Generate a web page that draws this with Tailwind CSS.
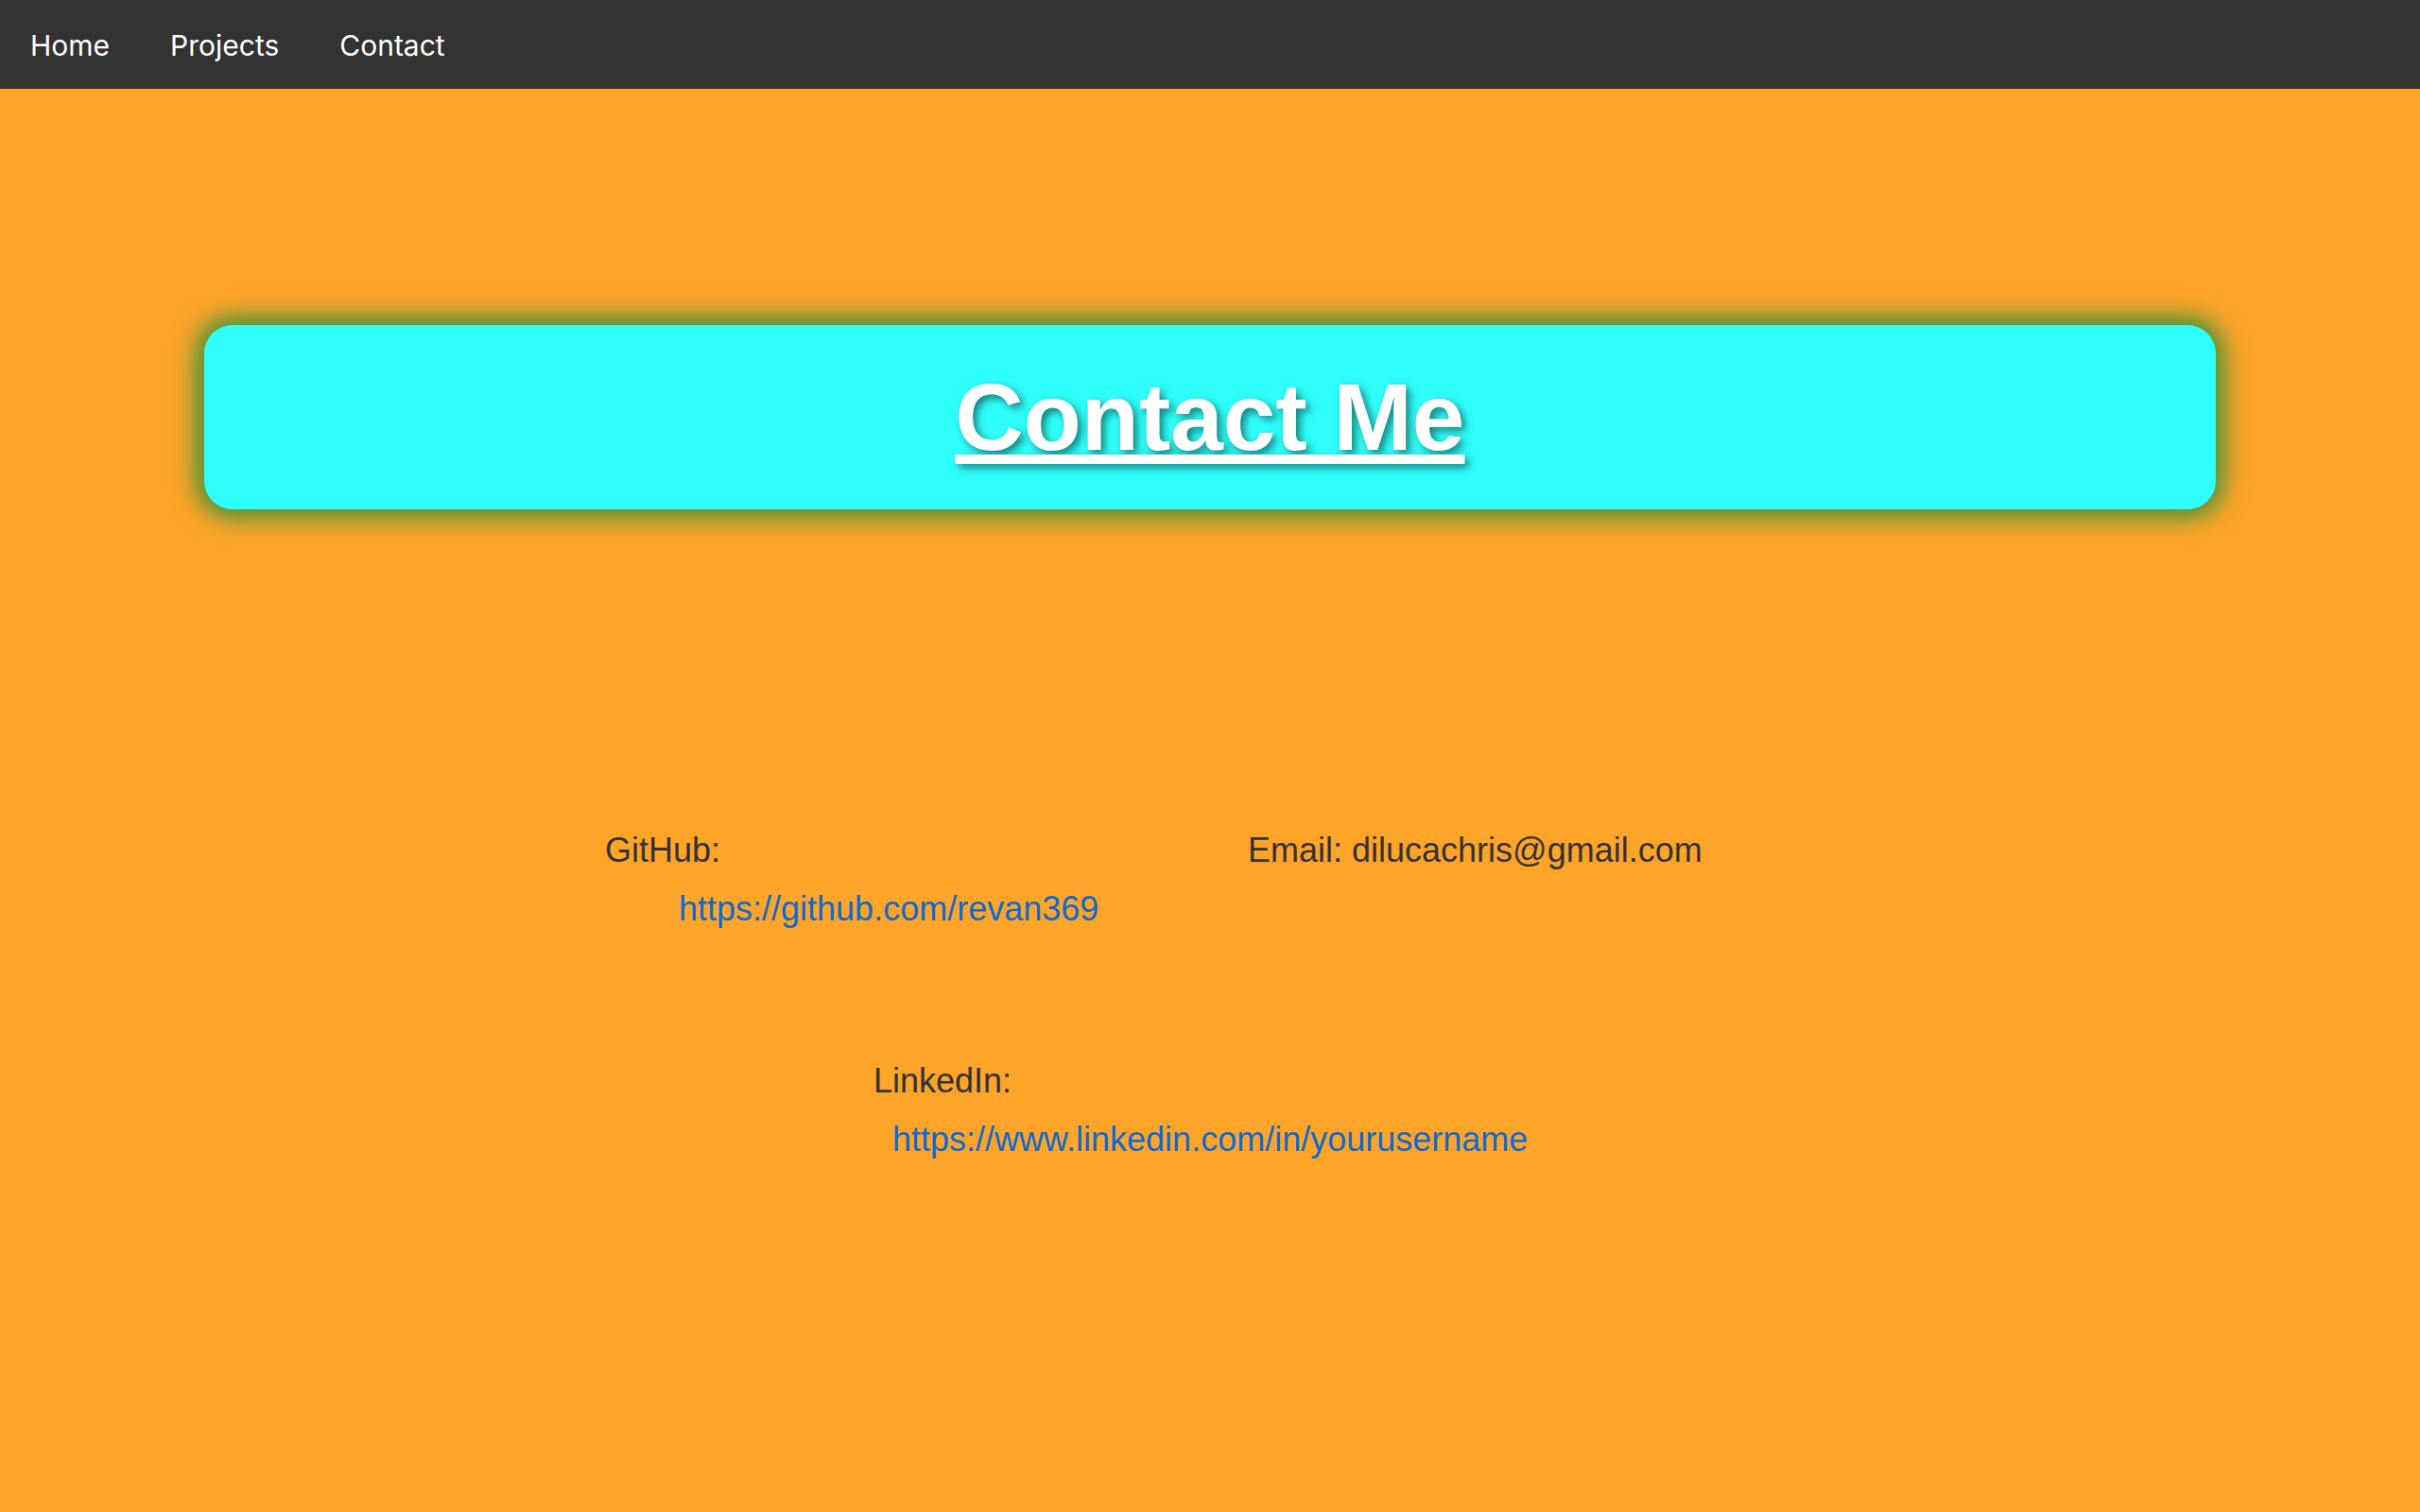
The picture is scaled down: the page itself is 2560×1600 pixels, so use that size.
<!DOCTYPE html>
<html lang="en">
<head>
<meta charset="utf-8">
<title>Contact Me</title>
<script src="https://cdn.jsdelivr.net/npm/@tailwindcss/browser@4"></script>
</head>
<body class="min-h-screen bg-[#fea429] font-['Liberation_Sans',Arial,sans-serif] text-4xl text-[#333]">
<nav class="bg-[#333] font-[Inter,sans-serif] text-white">
<ul class="flex text-[30px] leading-[40px]">
<li><a href="#" class="block px-8 pt-7 pb-[26px]">Home</a></li>
<li><a href="#" class="block px-8 pt-7 pb-[26px]">Projects</a></li>
<li><a href="#" class="block px-8 pt-7 pb-[26px]">Contact</a></li>
</ul>
</nav>
<main class="px-54 pt-[250px]">
<header class="rounded-[30px] bg-[#2efffb] py-10 text-center shadow-[0_0_26px_9px_#409238]">
<h1 class="text-[100px] leading-[115px] font-bold text-white underline text-shadow-[4px_4px_8px_rgba(0,0,0,0.5)]">Contact Me</h1>
</header>
<section class="mx-auto mt-[330px] flex max-w-[1280px] flex-wrap leading-[62px]">
<div class="w-1/2"><p>GitHub:</p><a href="https://github.com/revan369" class="block pl-[78px] text-[#0f6ad0]">https://github.com/revan369</a></div>
<p class="w-1/2 pl-10">Email: dilucachris@gmail.com</p>
<div class="mt-30 w-full pl-71"><p>LinkedIn:</p><a href="https://www.linkedin.com/in/yourusername" class="block pl-5 text-[#0f6ad0]">https://www.linkedin.com/in/yourusername</a></div>
</section>
</main>
</body>
</html>
